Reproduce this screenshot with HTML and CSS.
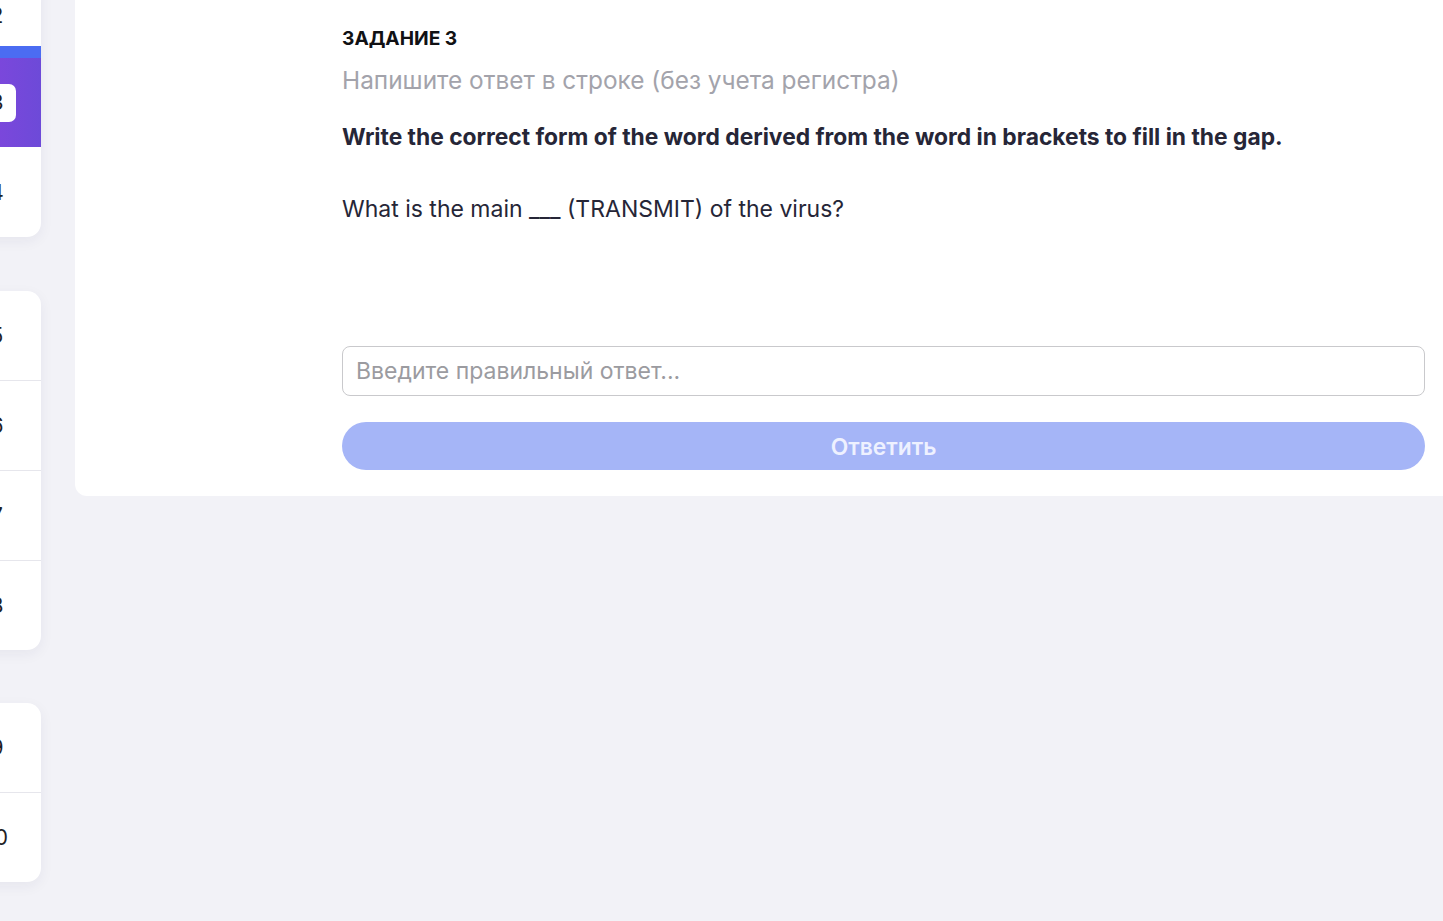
FILE: index.html
```html
<!DOCTYPE html>
<html lang="ru">
<head>
<meta charset="utf-8">
<title>Задание 3</title>
<link rel="stylesheet" href="styles.css">
</head>
<body>
<div class="layout">
  <aside class="sidebar">
    <div class="card card-first">
      <div class="row row-partial">2</div>
      <div class="row row-active"><span class="badge">3</span></div>
      <div class="row">4</div>
    </div>
    <div class="card card-second">
      <div class="row">5</div>
      <div class="row">6</div>
      <div class="row">7</div>
      <div class="row">8</div>
    </div>
    <div class="card card-third">
      <div class="row">9</div>
      <div class="row">10</div>
    </div>
  </aside>
  <main class="panel">
    <div class="task">
      <div class="task-label">ЗАДАНИЕ 3</div>
      <div class="task-hint">Напишите ответ в строке (без учета регистра)</div>
      <div class="task-question">Write the correct form of the word derived from the word in brackets to fill in the gap.</div>
      <div class="task-sentence">What is the main ___ (TRANSMIT) of the virus?</div>
      <input class="answer-input" type="text" placeholder="Введите правильный ответ...">
      <button class="answer-btn" type="button" disabled>Ответить</button>
    </div>
  </main>
</div>
</body>
</html>
```
FILE: styles.css
```css
* { box-sizing: border-box; }
html, body {
  margin: 0;
  padding: 0;
  height: 100%;
  overflow: hidden;
  background: #f2f2f7;
  font-family: Inter, "Noto Sans", "Liberation Sans", sans-serif;
}
.layout {
  display: flex;
  align-items: flex-start;
  height: 100%;
}
.sidebar {
  flex: 0 0 88px;
  margin-left: -47px;
  display: flex;
  flex-direction: column;
}
.card {
  background: #ffffff;
  border-radius: 14px;
  box-shadow: 0 4px 14px rgba(40, 40, 80, 0.06);
  overflow: hidden;
}
.card-first {
  margin-top: -16px;
  border-top-left-radius: 0;
  border-top-right-radius: 0;
}
.card-second { margin-top: 54px; }
.card-third { margin-top: 53px; }
.row {
  height: 90px;
  display: flex;
  align-items: center;
  justify-content: center;
  font-size: 21px;
  color: #1e1e24;
  border-top: 1px solid #e6e6ec;
}
.row:first-child { border-top: none; height: 89px; }
.card-first .row { border-top: none; }
.row-partial { height: 62px !important; }
.row-active {
  height: 101px;
  border-top: 12px solid #4b6cf2 !important;
  background: linear-gradient(90deg, #8a44df 0%, #6d4ad8 100%);
}
.badge {
  width: 38px;
  height: 38px;
  border-radius: 7px;
  background: #ffffff;
  display: flex;
  align-items: center;
  justify-content: center;
  color: #1e1e24;
  font-size: 21px;
}
.panel {
  flex: 1;
  margin-left: 34px;
  background: #ffffff;
  border-bottom-left-radius: 12px;
  padding: 26px 18px 26px 267px;
}
.task {
  display: flex;
  flex-direction: column;
}
.task-label {
  font-size: 19.2px;
  line-height: 24px;
  font-weight: 700;
  color: #111114;
}
.task-hint {
  margin-top: 14px;
  font-size: 24.4px;
  line-height: 32px;
  color: #a3a3ab;
}
.task-question {
  margin-top: 25px;
  font-size: 22.8px;
  line-height: 32px;
  font-weight: 700;
  color: #262637;
}
.task-sentence {
  margin-top: 40px;
  font-size: 23px;
  line-height: 32px;
  color: #262637;
}
.answer-input {
  margin-top: 121px;
  height: 50px;
  width: 100%;
  border: 1px solid #c9c9cc;
  border-radius: 8px;
  padding: 0 13px;
  font-family: inherit;
  font-size: 23px;
  color: #222;
  background: #ffffff;
  outline: none;
}
.answer-input::placeholder { color: #9b9ba0; }
.answer-btn {
  margin-top: 26px;
  height: 48px;
  width: 100%;
  border: none;
  border-radius: 24px;
  background: #a5b5f7;
  color: #eef1ff;
  font-family: inherit;
  font-size: 22.8px;
  font-weight: 600;
}
```
